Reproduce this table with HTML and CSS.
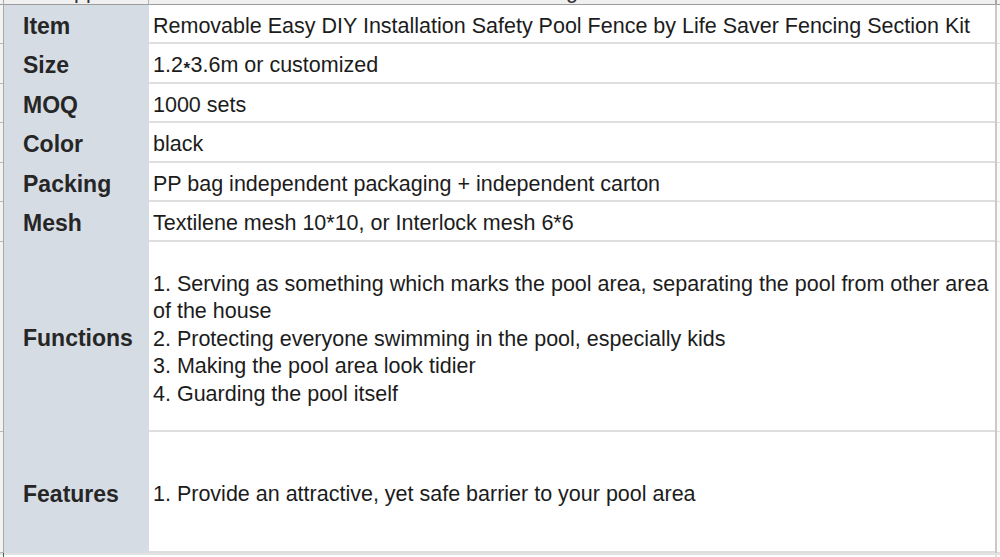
FILE: index.html
```html
<!DOCTYPE html>
<html lang="en">
<head>
<meta charset="utf-8">
<title>Pool Fence Specification</title>
<link rel="stylesheet" href="styles.css">
</head>
<body>
<div class="sheet">
  <div class="row top">
    <div class="gut"></div>
    <div class="vl"></div>
    <div class="lab clip"><span class="frag frag-a">pp</span></div>
    <div class="val clip"><span class="frag frag-b">g</span></div>
    <div class="rl"></div>
    <div class="rgut"></div>
  </div>

  <div class="row h39">
    <div class="gut"></div><div class="vl"></div>
    <div class="lab">Item</div>
    <div class="val">Removable Easy DIY Installation Safety Pool Fence by Life Saver Fencing Section Kit</div>
    <div class="rl"></div><div class="rgut"></div>
  </div>
  <div class="row h40">
    <div class="gut"></div><div class="vl"></div>
    <div class="lab">Size</div>
    <div class="val"><span>1.2<span class="ast">*</span>3.6m or customized</span></div>
    <div class="rl"></div><div class="rgut"></div>
  </div>
  <div class="row h39">
    <div class="gut"></div><div class="vl"></div>
    <div class="lab">MOQ</div>
    <div class="val">1000 sets</div>
    <div class="rl"></div><div class="rgut"></div>
  </div>
  <div class="row h40">
    <div class="gut"></div><div class="vl"></div>
    <div class="lab">Color</div>
    <div class="val">black</div>
    <div class="rl"></div><div class="rgut"></div>
  </div>
  <div class="row h39">
    <div class="gut"></div><div class="vl"></div>
    <div class="lab">Packing</div>
    <div class="val">PP bag independent packaging + independent carton</div>
    <div class="rl"></div><div class="rgut"></div>
  </div>
  <div class="row h40">
    <div class="gut"></div><div class="vl"></div>
    <div class="lab">Mesh</div>
    <div class="val">Textilene mesh 10*10, or Interlock mesh 6*6</div>
    <div class="rl"></div><div class="rgut"></div>
  </div>
  <div class="row h190">
    <div class="gut"></div><div class="vl"></div>
    <div class="lab">Functions</div>
    <div class="val">
      <div class="lines">
        <div>1. Serving as something which marks the pool area, separating the pool from other area</div>
        <div>of the house</div>
        <div>2. Protecting everyone swimming in the pool, especially kids</div>
        <div>3. Making the pool area look tidier</div>
        <div>4. Guarding the pool itself</div>
      </div>
    </div>
    <div class="rl"></div><div class="rgut"></div>
  </div>
  <div class="row h121">
    <div class="gut"></div><div class="vl"></div>
    <div class="lab">Features</div>
    <div class="val">1. Provide an attractive, yet safe barrier to your pool area</div>
    <div class="rl"></div><div class="rgut"></div>
  </div>

  <div class="row bottom">
    <div class="gut"></div><div class="vl sel"></div>
    <div class="lab"></div><div class="val"></div>
    <div class="rl"></div><div class="rgut"></div>
  </div>
</div>
</body>
</html>
```

FILE: styles.css
```css
* { box-sizing: border-box; }

html, body {
  margin: 0;
  padding: 0;
  background: #ffffff;
}

body {
  width: 1000px;
  height: 557px;
  overflow: hidden;
  font-family: "Liberation Sans", Arial, sans-serif;
  color: #1c1c1c;
}

.sheet {
  display: flex;
  flex-direction: column;
  width: 1000px;
}

.row {
  display: grid;
  grid-template-columns: 3px 1px 145px 846px 2px 3px;
}

.h39 { height: 39px; }
.h40 { height: 40px; }
.h190 { height: 190px; }
.h121 { height: 121px; }

.gut {
  background: #f2f2f2;
  border-bottom: 1px solid #b9b9b9;
}

.vl { background: #a9a9a9; }

.rl { background: #c9c9c9; }

.rgut {
  background: #fbfbfb;
  border-bottom: 1px solid #e0e0e0;
}

.lab {
  background: #d6dce4;
  display: flex;
  align-items: center;
  padding-left: 19px;
  padding-top: 3px;
  font-weight: bold;
  font-size: 23px;
  color: #262626;
  white-space: nowrap;
}

.val {
  background: #ffffff;
  border-bottom: 2px solid #dedede;
  display: flex;
  align-items: center;
  padding-left: 4px;
  padding-top: 5px;
  font-size: 21.5px;
  white-space: nowrap;
}

.ast {
  font-size: 17px;
  font-weight: bold;
  vertical-align: -2px;
  padding: 0 0.5px;
}

.lines {
  display: flex;
  flex-direction: column;
  line-height: 27.5px;
  padding-top: 2px;
}

/* clipped previous spreadsheet row */
.top { height: 5px; }
.top .gut { border-bottom: 1px solid #9c9c9c; }
.top .lab,
.top .val {
  background: #f0f0f0;
  border-bottom: 1px solid #9c9c9c;
  overflow: hidden;
  align-items: flex-start;
  padding-left: 0;
  padding-top: 0;
}
.top .lab { border-right: 1px solid #b3b3b3; }
.top .rl { background: #a9a9a9; }
.top .rgut { background: #f0f0f0; border-bottom: 1px solid #9c9c9c; }

.frag {
  display: block;
  font-weight: normal;
  font-size: 21.5px;
  line-height: 24px;
  margin-top: -21px;
  color: #333333;
}
.frag-a { margin-left: 70px; }
.frag-b { margin-left: 417px; }

.bottom { height: 4px; }
.bottom .gut,
.bottom .lab,
.bottom .val,
.bottom .rgut {
  background: #ffffff;
  border-top: 2px solid #e2e2e2;
  border-bottom: none;
  padding: 0;
}
.bottom .rl { background: #e2e2e2; }
.bottom .sel { background: #217346; }
```
